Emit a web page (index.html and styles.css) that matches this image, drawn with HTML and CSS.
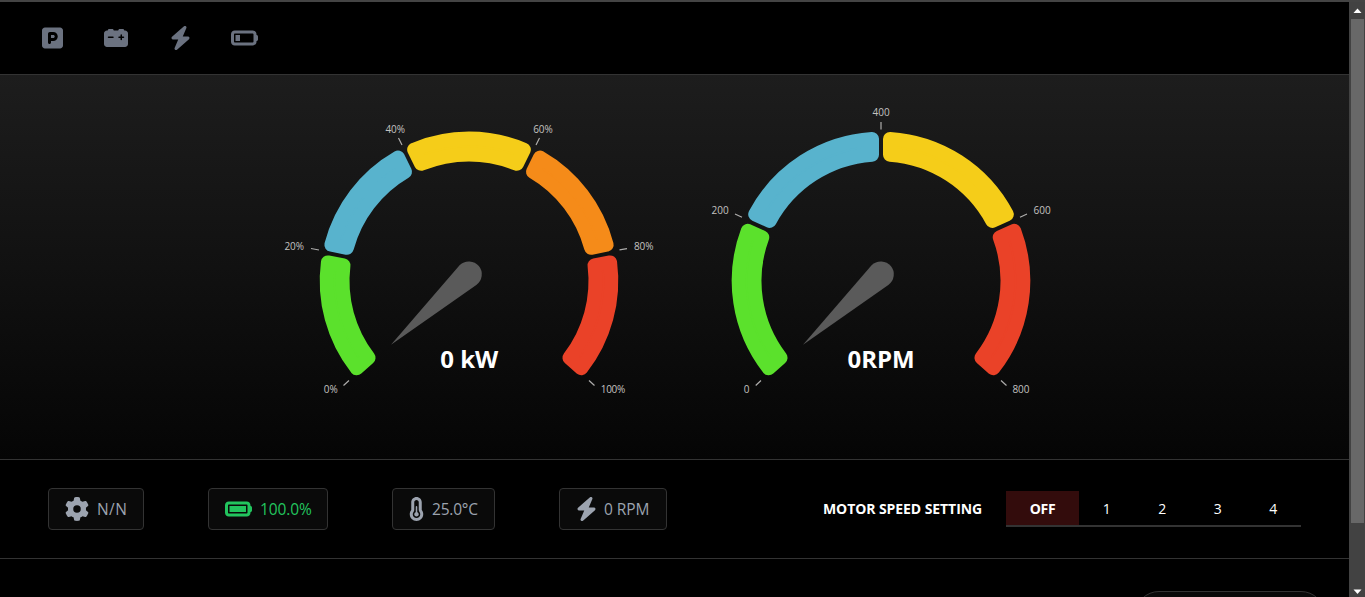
FILE: index.html
```html
<!DOCTYPE html>
<html lang="en">
<head>
<meta charset="utf-8">
<title>Motor dashboard</title>
<link rel="stylesheet" href="styles.css">
</head>
<body>
<svg class="defs" aria-hidden="true">
  <symbol id="parking" viewBox="0 0 448 512"><path d="M64 32C28.7 32 0 60.7 0 96V416c0 35.3 28.7 64 64 64H384c35.3 0 64-28.7 64-64V96c0-35.3-28.7-64-64-64H64zM192 256h48c17.7 0 32-14.3 32-32s-14.3-32-32-32H192v64zm48 64H192v32c0 17.7-14.3 32-32 32s-32-14.3-32-32V288 168c0-22.1 17.9-40 40-40h72c53 0 96 43 96 96s-43 96-96 96z"/></symbol>
  <symbol id="car-battery" viewBox="0 0 512 512"><path d="M80 96c0-17.7 14.3-32 32-32h64c17.7 0 32 14.3 32 32l96 0c0-17.7 14.3-32 32-32h64c17.7 0 32 14.3 32 32h16c35.3 0 64 28.7 64 64V384c0 35.3-28.7 64-64 64H64c-35.3 0-64-28.7-64-64V160c0-35.3 28.7-64 64-64l16 0zm304 96c0-8.8-7.2-16-16-16s-16 7.2-16 16v32H320c-8.8 0-16 7.2-16 16s7.2 16 16 16h32v32c0 8.8 7.2 16 16 16s16-7.2 16-16V256h32c8.8 0 16-7.2 16-16s-7.2-16-16-16H384V192zM80 240c0 8.8 7.2 16 16 16h96c8.8 0 16-7.2 16-16s-7.2-16-16-16H96c-8.8 0-16 7.2-16 16z"/></symbol>
  <symbol id="bolt" viewBox="0 0 448 512"><path d="M349.4 44.6c5.9-13.7 1.5-29.7-10.6-38.5s-28.6-8-39.9 1.8l-256 224c-10 8.8-13.6 22.9-8.9 35.3S50.7 288 64 288H175.5L98.6 467.4c-5.9 13.7-1.5 29.7 10.6 38.5s28.6 8 39.9-1.8l256-224c10-8.8 13.6-22.9 8.9-35.3s-16.6-20.7-30-20.7H272.5L349.4 44.6z"/></symbol>
  <symbol id="battery-low" viewBox="0 0 576 512"><path d="M80 160c-8.8 0-16 7.2-16 16V336c0 8.8 7.2 16 16 16H464c8.8 0 16-7.2 16-16V176c0-8.8-7.2-16-16-16H80zM0 176c0-44.2 35.8-80 80-80H464c44.2 0 80 35.8 80 80v16c17.7 0 32 14.3 32 32v64c0 17.7-14.3 32-32 32v16c0 44.2-35.8 80-80 80H80c-44.2 0-80-35.8-80-80V176z" fill-rule="evenodd"/><path d="M96 192h96v128H96z"/></symbol>
  <symbol id="battery-full" viewBox="0 0 576 512"><path d="M80 160c-8.8 0-16 7.2-16 16V336c0 8.8 7.2 16 16 16H464c8.8 0 16-7.2 16-16V176c0-8.8-7.2-16-16-16H80zM0 176c0-44.2 35.8-80 80-80H464c44.2 0 80 35.8 80 80v16c17.7 0 32 14.3 32 32v64c0 17.7-14.3 32-32 32v16c0 44.2-35.8 80-80 80H80c-44.2 0-80-35.8-80-80V176z" fill-rule="evenodd"/><path d="M96 192h352v128H96z"/></symbol>
  <symbol id="gear" viewBox="0 0 512 512"><path d="M495.9 166.6c3.2 8.7 .5 18.4-6.4 24.6l-43.3 39.4c1.1 8.3 1.7 16.8 1.7 25.4s-.6 17.1-1.7 25.4l43.3 39.4c6.9 6.2 9.6 15.9 6.4 24.6c-4.4 11.9-9.7 23.3-15.8 34.3l-4.7 8.1c-6.6 11-14 21.4-22.1 31.2c-5.9 7.2-15.7 9.6-24.5 6.8l-55.7-17.7c-13.4 10.3-28.2 18.9-44 25.4l-12.5 57.1c-2 9.1-9 16.3-18.2 17.8c-13.8 2.3-28 3.5-42.5 3.5s-28.7-1.2-42.5-3.5c-9.2-1.5-16.2-8.7-18.2-17.8l-12.5-57.1c-15.8-6.5-30.6-15.1-44-25.4L83.1 425.9c-8.8 2.8-18.6 .3-24.5-6.8c-8.1-9.8-15.5-20.2-22.1-31.2l-4.7-8.1c-6.1-11-11.4-22.4-15.8-34.3c-3.2-8.7-.5-18.4 6.4-24.6l43.3-39.4C64.6 273.1 64 264.6 64 256s.6-17.1 1.7-25.4L22.4 191.2c-6.9-6.2-9.6-15.9-6.4-24.6c4.4-11.9 9.7-23.3 15.8-34.3l4.7-8.1c6.6-11 14-21.4 22.1-31.2c5.9-7.2 15.7-9.6 24.5-6.8l55.7 17.7c13.4-10.3 28.2-18.9 44-25.4l12.5-57.1c2-9.1 9-16.3 18.2-17.8C227.3 1.2 241.5 0 256 0s28.7 1.2 42.5 3.5c9.2 1.5 16.2 8.7 18.2 17.8l12.5 57.1c15.8 6.5 30.6 15.1 44 25.4l55.7-17.7c8.8-2.8 18.6-.3 24.5 6.8c8.1 9.8 15.5 20.2 22.1 31.2l4.7 8.1c6.1 11 11.4 22.4 15.8 34.3zM256 336a80 80 0 1 0 0-160 80 80 0 1 0 0 160z"/></symbol>
  <symbol id="thermometer" viewBox="0 0 320 512"><path fill-rule="evenodd" d="M160 64c-26.5 0-48 21.5-48 48V276.5c0 17.3-7.1 31.9-15.3 42.5C86.2 332.6 80 349.5 80 368c0 44.2 35.8 80 80 80s80-35.8 80-80c0-18.5-6.2-35.4-16.7-48.9c-8.2-10.6-15.3-25.2-15.3-42.5V112c0-26.5-21.5-48-48-48zM48 112C48 50.2 98.1 0 160 0s112 50.1 112 112V276.5c0 .1 .1 .3 .2 .6c.2 .6 .8 1.6 1.7 2.8c18.9 24.4 30.1 55 30.1 88.1c0 79.5-64.5 144-144 144S16 447.5 16 368c0-33.2 11.2-63.8 30.1-88.1c.9-1.2 1.5-2.2 1.7-2.8c.1-.3 .2-.5 .2-.6V112z"/><path d="M208 368c0 26.5-21.5 48-48 48s-48-21.5-48-48c0-20.9 13.4-38.7 32-45.3V208c0-8.8 7.2-16 16-16s16 7.2 16 16v114.7c18.6 6.6 32 24.4 32 45.3z"/></symbol>
</svg>
<div class="app">
  <main class="page">
    <header class="status-bar">
      <svg class="icon w21"><use href="#parking"/></svg>
      <svg class="icon w24"><use href="#car-battery"/></svg>
      <svg class="icon w21 charging"><use href="#bolt"/></svg>
      <svg class="icon w27"><use href="#battery-low"/></svg>
    </header>
    <section class="gauges">
      <svg class="gauge" viewBox="263 75 412 384">
        <g class="arcs" data-cx="469" data-colors="#5BE12C #58B3CD #F5CD19 #F58B19 #EA4228"></g>
        <path class="needle" d="M391 344.8L459.8 265A13 13 0 1 1 476.3 285Z"/>
        <path class="ticks" d="M343.5 385.5L349 380.5M311 248.5L319 250M398.5 138L402 145M539.5 138L536 145M619.5 249.8L627 248.6M589 380.5L594.5 385.5"/>
        <g class="labels">
          <text x="323.7" y="393.3" textLength="14">0%</text>
          <text x="284.5" y="250.3" textLength="19.5">20%</text>
          <text x="385.5" y="133.3" textLength="19.5">40%</text>
          <text x="533.2" y="133.3" textLength="19.5">60%</text>
          <text x="634" y="250.3" textLength="19.5">80%</text>
          <text x="600.8" y="393.3" textLength="24.5">100%</text>
        </g>
        <text class="value" x="440.3" y="368" textLength="58">0 kW</text>
      </svg>
      <svg class="gauge" viewBox="675 75 412 384">
        <g class="arcs" data-cx="881" data-colors="#5BE12C #58B3CD #F5CD19 #EA4228"></g>
        <path class="needle" d="M803 344.8L871.8 265A13 13 0 1 1 888.3 285Z"/>
        <path class="ticks" d="M755.7 385.5L761 380.5M735 214L742 217.3M881 122V129.5M1020 217.3L1027 214M1001 380.5L1006.5 385.5"/>
        <g class="labels">
          <text x="743.7" y="393.3">0</text>
          <text x="711.6" y="214.3" textLength="17">200</text>
          <text x="872.6" y="116.3" textLength="17">400</text>
          <text x="1033.6" y="214.3" textLength="17">600</text>
          <text x="1012.4" y="393.3" textLength="17">800</text>
        </g>
        <text class="value" x="847.6" y="368" textLength="67">0RPM</text>
      </svg>
    </section>
    <section class="controls">
      <div class="readout gear-state"><svg class="icon w24"><use href="#gear"/></svg><span>N/N</span></div>
      <div class="readout charge"><svg class="icon w27"><use href="#battery-full"/></svg><span>100.0%</span></div>
      <div class="readout temp"><svg class="icon w15"><use href="#thermometer"/></svg><span>25.0°C</span></div>
      <div class="readout rpm"><svg class="icon w21"><use href="#bolt"/></svg><span>0 RPM</span></div>
      <div class="speed">
        <span class="speed-title">MOTOR SPEED SETTING</span>
        <div class="tabs"><div class="tab active">OFF</div><div class="tab">1</div><div class="tab">2</div><div class="tab">3</div><div class="tab">4</div></div>
      </div>
    </section>
    <section class="footer"><div class="pill"></div></section>
  </main>
  <div class="scrollbar">
    <svg class="arrow" viewBox="0 0 16 17"><path d="M8.5 8.5L12.5 13H4.5Z"/></svg>
    <div class="thumb"></div>
    <svg class="arrow down" viewBox="0 0 16 17"><path d="M4.5 9.5H12.5L8.5 14Z"/></svg>
  </div>
</div>
<script src="gauge.js"></script>
</body>
</html>
```
FILE: styles.css
```css
* { box-sizing: border-box; }
body {
  margin: 0;
  background: #000;
  color: #fff;
  font-family: "Open Sans", "Noto Sans", sans-serif;
  overflow: hidden;
}
.defs { display: none; }
.app { display: flex; height: 597px; border-top: 2px solid #444; }
.page { width: 1349px; height: 595px; overflow: hidden; }
.icon { display: block; height: 24px; flex: none; fill: currentColor; }
.w15 { width: 15px; }
.w21 { width: 21px; }
.w24 { width: 24px; }
.w27 { width: 27px; }
.status-bar {
  display: flex;
  align-items: center;
  gap: 41px;
  height: 73px;
  padding-left: 42px;
  border-bottom: 1px solid #333;
  color: #6b7280;
}
.charging { margin: 0 -1px 0 1px; }
.gauges {
  display: flex;
  height: 385px;
  padding-left: 263px;
  border-bottom: 1px solid #333;
  background: linear-gradient(#1d1d1d, #050505);
}
.gauge { display: block; width: 412px; height: 384px; }
.arcs path { stroke-width: 14; stroke-linejoin: round; }
.needle { fill: #5a5a5a; }
.ticks { fill: none; stroke: #adacab; stroke-width: 1.2; }
.labels { fill: #c4c2c0; font-size: 10px; }
.value { fill: #fff; font-size: 24px; font-weight: 700; }
.controls {
  display: flex;
  align-items: center;
  gap: 64px;
  height: 99px;
  padding: 0 48px;
  border-bottom: 1px solid #333;
}
.readout {
  display: flex;
  align-items: center;
  gap: 8px;
  height: 42px;
  padding: 0 16px;
  border: 1px solid #333;
  border-radius: 4px;
  background: #0a0a0a;
  color: #9ca3af;
  font-size: 15.5px;
  letter-spacing: -0.1px;
  white-space: nowrap;
}
.gear-state { width: 96px; letter-spacing: 0.4px; }
.charge { width: 120px; color: #22c55e; }
.temp { width: 103px; letter-spacing: -0.2px; }
.rpm { width: 108px; gap: 7px; }
.speed { display: flex; align-items: center; gap: 24px; margin-left: auto; }
.speed-title {
  width: 159px;
  padding-bottom: 2px;
  font-size: 14px;
  font-weight: 700;
  letter-spacing: -0.08px;
  white-space: nowrap;
}
.tabs { display: flex; width: 295px; height: 36px; border-bottom: 2px solid #333; }
.tab {
  display: flex;
  flex: 1;
  align-items: center;
  justify-content: center;
  font-size: 14px;
}
.tab.active { flex: 0 0 73px; background: #330c0c; font-weight: 700; letter-spacing: -0.3px; }
.footer { display: flex; justify-content: flex-end; padding: 32px 24px 0; }
.pill { width: 190px; height: 48px; border: 1px solid #333; border-radius: 24px; background: #0a0a0a; }
.scrollbar { display: flex; flex-direction: column; width: 16px; background: #424242; }
.arrow { display: block; width: 16px; height: 17px; margin-top: -2px; margin-bottom: 2px; fill: #fff; }
.thumb { width: 13px; height: 504px; margin-left: 2px; background: #686868; }
.arrow.down { margin: auto 0 0; }
```
FILE: gauge.js
```js
// Builds the rounded ring segments of each gauge.
const CY = 280.9, OUTER = 149.3, INNER = 119.5, ROUND = 7, HALF_GAP = 2, SWEEP = 131.5 * Math.PI / 180;
document.querySelectorAll(".arcs").forEach(function (group) {
  const cx = Number(group.dataset.cx);
  const colors = group.dataset.colors.split(" ");
  const ro = OUTER - ROUND, ri = INNER + ROUND, inset = ROUND + HALF_GAP;
  const point = function (r, a) {
    return (cx + r * Math.sin(a)).toFixed(2) + " " + (CY - r * Math.cos(a)).toFixed(2);
  };
  colors.forEach(function (color, i) {
    const a = -SWEEP + 2 * SWEEP * i / colors.length;
    const b = -SWEEP + 2 * SWEEP * (i + 1) / colors.length;
    const o = Math.asin(inset / ro), n = Math.asin(inset / ri);
    const path = document.createElementNS("http://www.w3.org/2000/svg", "path");
    path.setAttribute("d", "M" + point(ro, a + o) + "A" + ro + " " + ro + " 0 0 1 " + point(ro, b - o) +
      "L" + point(ri, b - n) + "A" + ri + " " + ri + " 0 0 0 " + point(ri, a + n) + "Z");
    path.setAttribute("fill", color);
    path.setAttribute("stroke", color);
    group.appendChild(path);
  });
});
```
